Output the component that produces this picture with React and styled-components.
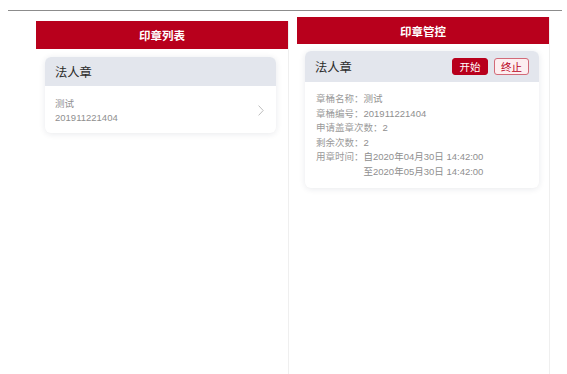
import React from "react";
import styled, { createGlobalStyle } from "styled-components";

const GlobalStyle = createGlobalStyle`
  html, body {
    margin: 0;
    padding: 0;
    background: #ffffff;
    font-family: "Liberation Sans", "Noto Sans CJK SC", sans-serif;
  }
`;

const Page = styled.div`
  height: 374px;
  overflow: hidden;
  padding-top: 10px;
  box-sizing: border-box;
`;

const Rule = styled.div`
  margin: 0 5px 0 8px;
  border-top: 1px solid #8c8c8c;
`;

const Screens = styled.div`
  display: flex;
  align-items: flex-start;
  padding-left: 36px;
  gap: 8px;
`;

const Screen = styled.div`
  width: 252px;
  height: 374px;
  margin-top: ${({ offset }) => offset}px;
  border-right: 1px solid #efefef;
`;

const Header = styled.div`
  height: ${({ tall }) => (tall ? 28 : 27)}px;
  background: #b8001c;
  color: #ffffff;
  font-size: 11.5px;
  font-weight: bold;
  display: flex;
  align-items: center;
  justify-content: center;
`;

const Body = styled.div`
  padding: ${({ pad }) => pad};
`;

const Card = styled.div`
  border-radius: 6px;
  background: #ffffff;
  box-shadow: 0 1px 6px rgba(30, 40, 70, 0.1);
  overflow: hidden;
`;

const CardHead = styled.div`
  height: ${({ h }) => h}px;
  background: #e3e6ed;
  display: flex;
  align-items: center;
  padding: 0 10px;
  font-size: 12.3px;
  color: #2b2b2b;
`;

const Title = styled.div`
  flex: 1;
`;

const Btn = styled.div`
  width: ${({ filled }) => (filled ? 36 : 35)}px;
  height: 17px;
  box-sizing: border-box;
  border-radius: 3px;
  display: flex;
  align-items: center;
  justify-content: center;
  font-size: 10.5px;
  margin-left: 6px;
  background: ${({ filled }) => (filled ? "#b8001c" : "#fdeef0")};
  color: ${({ filled }) => (filled ? "#ffffff" : "#b8001c")};
  border: 1px solid ${({ filled }) => (filled ? "#b8001c" : "#d26a78")};
`;

const ListRow = styled.div`
  height: 47px;
  display: flex;
  align-items: center;
  padding: 0 12px 0 10px;
`;

const ListText = styled.div`
  flex: 1;
  font-size: 9.5px;
  line-height: 14px;
  color: #8f8f8f;
  padding-top: 2px;
`;

const Chevron = styled.svg`
  width: 6px;
  height: 11px;
  margin-top: 2px;
`;

const Details = styled.div`
  padding: 10px 10px 9px 11px;
  font-size: 9.5px;
  line-height: 14.5px;
  color: #8f8f8f;
`;

const Line = styled.div`
  display: flex;
`;

const Label = styled.span`
  color: #9a9a9a;
  white-space: nowrap;
`;

const Values = styled.div`
  display: flex;
  flex-direction: column;
`;

export default function App() {
  return (
    <>
      <GlobalStyle />
      <Page>
        <Rule />
        <Screens>
          <Screen offset={10}>
            <Header tall>印章列表</Header>
            <Body pad="8px 12px 0 9px">
              <Card>
                <CardHead h={29}>
                  <Title>法人章</Title>
                </CardHead>
                <ListRow>
                  <ListText>
                    <div>测试</div>
                    <div>201911221404</div>
                  </ListText>
                  <Chevron viewBox="0 0 6 11">
                    <path d="M0.6 0.6 L5.2 5.5 L0.6 10.4" fill="none" stroke="#bdbdbd" strokeWidth="1" />
                  </Chevron>
                </ListRow>
              </Card>
            </Body>
          </Screen>
          <Screen offset={6}>
            <Header>印章管控</Header>
            <Body pad="7px 10px 0 8px">
              <Card>
                <CardHead h={31}>
                  <Title>法人章</Title>
                  <Btn filled>开始</Btn>
                  <Btn>终止</Btn>
                </CardHead>
                <Details>
                  <Line><Label>章桶名称：</Label>测试</Line>
                  <Line><Label>章桶编号：</Label>201911221404</Line>
                  <Line><Label>申请盖章次数：</Label>2</Line>
                  <Line><Label>剩余次数：</Label>2</Line>
                  <Line>
                    <Label>用章时间：</Label>
                    <Values>
                      <span>自2020年04月30日 14:42:00</span>
                      <span>至2020年05月30日 14:42:00</span>
                    </Values>
                  </Line>
                </Details>
              </Card>
            </Body>
          </Screen>
        </Screens>
      </Page>
    </>
  );
}
